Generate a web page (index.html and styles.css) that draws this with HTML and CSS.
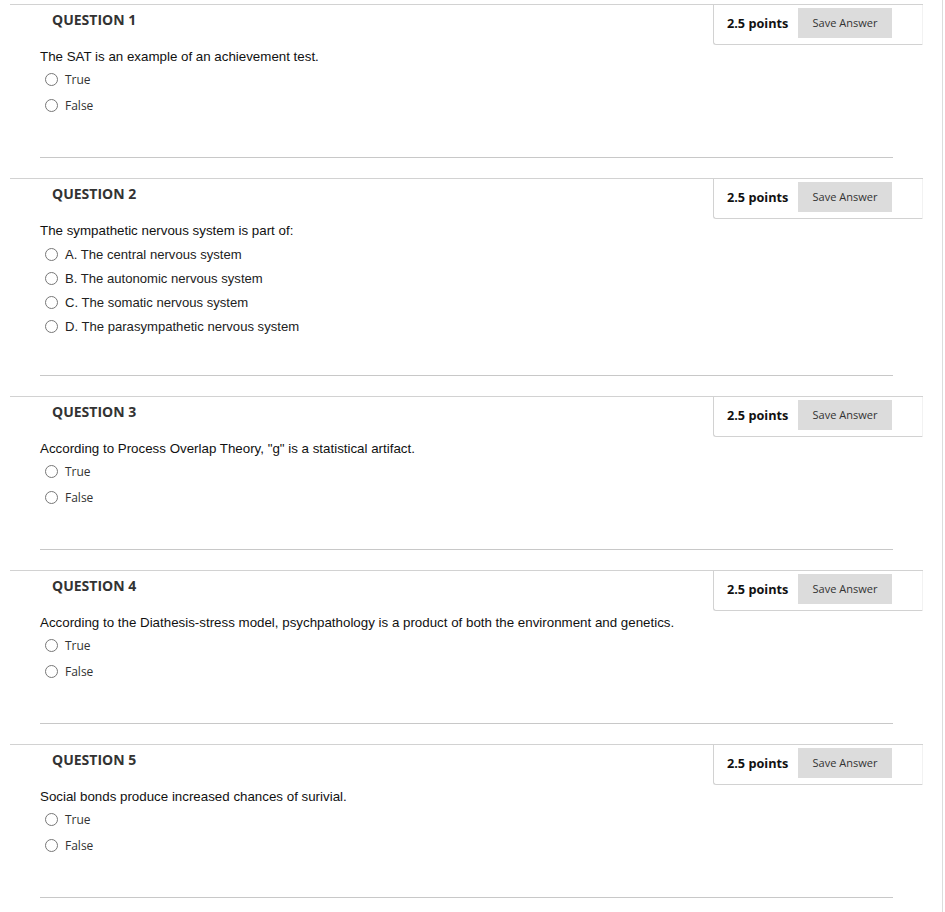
FILE: index.html
```html
<!DOCTYPE html>
<html>
<head>
<meta charset="utf-8">
<link rel="stylesheet" href="styles.css">
</head>
<body>
<div class="page">
  <div class="questions">

    <section class="question">
      <div class="q-head">
        <h3 class="q-title">QUESTION 1</h3>
        <div class="points-box">
          <span class="points">2.5 points</span>
          <button class="save">Save Answer</button>
        </div>
      </div>
      <p class="q-text">The SAT is an example of an achievement test.</p>
      <ul class="options tf">
        <li class="option"><span class="radio"></span><span class="label">True</span></li>
        <li class="option"><span class="radio"></span><span class="label">False</span></li>
      </ul>
      <hr class="divider">
    </section>

    <section class="question">
      <div class="q-head">
        <h3 class="q-title">QUESTION 2</h3>
        <div class="points-box">
          <span class="points">2.5 points</span>
          <button class="save">Save Answer</button>
        </div>
      </div>
      <p class="q-text">The sympathetic nervous system is part of:</p>
      <ul class="options mc">
        <li class="option"><span class="radio"></span><span class="mc-label">A. The central nervous system</span></li>
        <li class="option"><span class="radio"></span><span class="mc-label">B. The autonomic nervous system</span></li>
        <li class="option"><span class="radio"></span><span class="mc-label">C. The somatic nervous system</span></li>
        <li class="option"><span class="radio"></span><span class="mc-label">D. The parasympathetic nervous system</span></li>
      </ul>
      <hr class="divider">
    </section>

    <section class="question">
      <div class="q-head">
        <h3 class="q-title">QUESTION 3</h3>
        <div class="points-box">
          <span class="points">2.5 points</span>
          <button class="save">Save Answer</button>
        </div>
      </div>
      <p class="q-text">According to Process Overlap Theory, "g" is a statistical artifact.</p>
      <ul class="options tf">
        <li class="option"><span class="radio"></span><span class="label">True</span></li>
        <li class="option"><span class="radio"></span><span class="label">False</span></li>
      </ul>
      <hr class="divider">
    </section>

    <section class="question">
      <div class="q-head">
        <h3 class="q-title">QUESTION 4</h3>
        <div class="points-box">
          <span class="points">2.5 points</span>
          <button class="save">Save Answer</button>
        </div>
      </div>
      <p class="q-text">According to the Diathesis-stress model, psychpathology is a product of both the environment and genetics.</p>
      <ul class="options tf">
        <li class="option"><span class="radio"></span><span class="label">True</span></li>
        <li class="option"><span class="radio"></span><span class="label">False</span></li>
      </ul>
      <hr class="divider">
    </section>

    <section class="question">
      <div class="q-head">
        <h3 class="q-title">QUESTION 5</h3>
        <div class="points-box">
          <span class="points">2.5 points</span>
          <button class="save">Save Answer</button>
        </div>
      </div>
      <p class="q-text">Social bonds produce increased chances of surivial.</p>
      <ul class="options tf">
        <li class="option"><span class="radio"></span><span class="label">True</span></li>
        <li class="option"><span class="radio"></span><span class="label">False</span></li>
      </ul>
      <hr class="divider">
    </section>

  </div>
</div>
</body>
</html>
```

FILE: styles.css
```css
* { box-sizing: border-box; }

html, body {
  margin: 0;
  padding: 0;
  background: #fff;
}

.page {
  width: 943px;
  min-height: 912px;
  border-right: 1px solid #dcdcdc;
  padding: 4px 0 0 10px;
}

.questions {
  width: 913px;
  display: flex;
  flex-direction: column;
  gap: 20px;
}

.question {
  border-top: 1px solid #d2d2d2;
}

.q-head {
  display: flex;
  justify-content: space-between;
  align-items: flex-start;
}

.q-title {
  margin: 0;
  padding: 5px 0 0 42px;
  font-family: "Open Sans", sans-serif;
  font-weight: 700;
  font-size: 14px;
  line-height: 20px;
  color: #333;
}

.points-box {
  width: 210px;
  height: 40px;
  display: flex;
  align-items: center;
  padding: 0 30px 4px 13px;
  justify-content: space-between;
  border-left: 1px solid #d2d2d2;
  border-bottom: 1px solid #d2d2d2;
  border-right: 1px solid #f2f2f2;
  border-bottom-left-radius: 3px;
}

.points {
  font-family: "Open Sans", sans-serif;
  font-weight: 700;
  font-size: 12.7px;
  color: #111;
}

.save {
  width: 94px;
  height: 30px;
  border: none;
  border-radius: 0;
  background: #dcdcdc;
  font-family: "Open Sans", sans-serif;
  font-size: 11px;
  color: #333;
  padding: 0;
}

.q-text {
  margin: 3px 0 0 30px;
  font-family: "Liberation Sans", Arial, sans-serif;
  font-size: 13.33px;
  line-height: 18px;
  color: #111;
}

.options {
  list-style: none;
  margin: 0 0 0 35px;
  padding: 0;
}

.options.tf { margin-top: 0; }
.options.tf .option { height: 26px; }
.options.mc { margin-top: 2px; }
.options.mc .option { height: 24px; }

.option {
  display: flex;
  align-items: center;
}

.radio {
  width: 13px;
  height: 13px;
  border: 1px solid #777;
  border-radius: 50%;
  margin-right: 7px;
  flex: none;
  background: #fff;
}

.label {
  font-family: "Open Sans", sans-serif;
  font-size: 12px;
  color: #333;
}

.mc-label {
  font-family: "Liberation Sans", Arial, sans-serif;
  font-size: 13.1px;
  color: #222;
}

.divider {
  margin: 39px 30px 0 30px;
  border: none;
  border-top: 1px solid #c8c8c8;
  height: 0;
}

.options.mc + .divider { margin-top: 37px; }
```
